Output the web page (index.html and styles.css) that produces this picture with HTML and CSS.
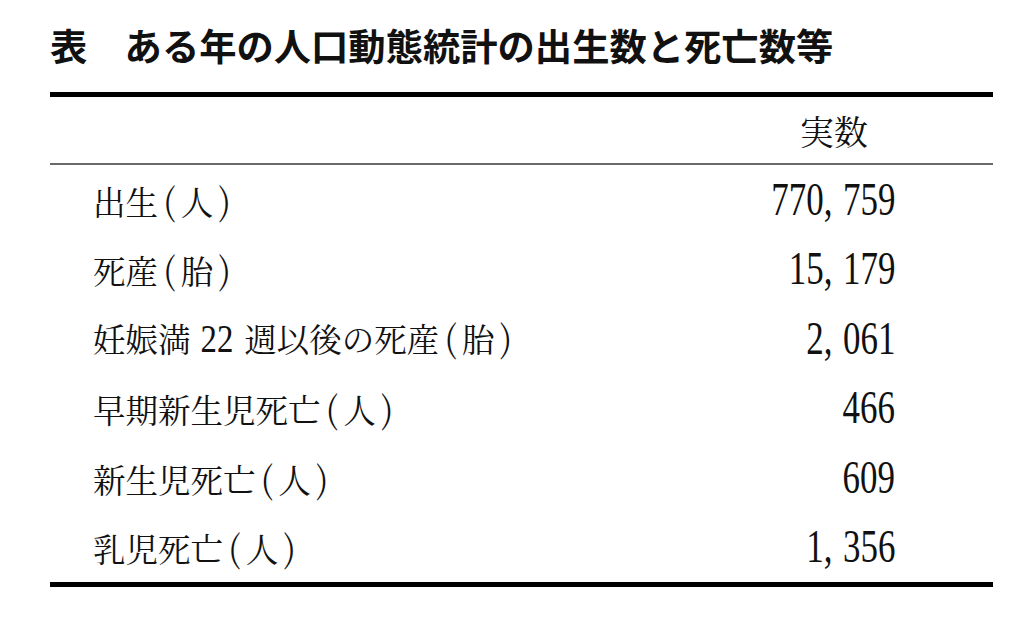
FILE: index.html
```html
<!DOCTYPE html>
<html lang="ja">
<head>
<meta charset="utf-8">
<title>人口動態統計</title>
<link rel="stylesheet" href="styles.css">
</head>
<body>
<div class="page">
  <h1 class="title">表　ある年の人口動態統計の出生数と死亡数等</h1>
  <table class="stats">
    <thead>
      <tr>
        <th class="label-head"></th>
        <th class="value-head">実数</th>
      </tr>
    </thead>
    <tbody>
      <tr><td class="label">出生<span class="paren">(</span>人<span class="paren">)</span></td><td class="value"><span class="num">770<span class="comma">,</span>759</span></td></tr>
      <tr><td class="label">死産<span class="paren">(</span>胎<span class="paren">)</span></td><td class="value"><span class="num">15<span class="comma">,</span>179</span></td></tr>
      <tr><td class="label">妊娠満 <span class="latin">22</span> 週以後の死産<span class="paren">(</span>胎<span class="paren">)</span></td><td class="value"><span class="num">2<span class="comma">,</span>061</span></td></tr>
      <tr><td class="label">早期新生児死亡<span class="paren">(</span>人<span class="paren">)</span></td><td class="value"><span class="num">466</span></td></tr>
      <tr><td class="label">新生児死亡<span class="paren">(</span>人<span class="paren">)</span></td><td class="value"><span class="num">609</span></td></tr>
      <tr><td class="label">乳児死亡<span class="paren">(</span>人<span class="paren">)</span></td><td class="value"><span class="num">1<span class="comma">,</span>356</span></td></tr>
    </tbody>
  </table>
</div>
</body>
</html>
```

FILE: styles.css
```css
html, body {
  margin: 0;
  padding: 0;
  background: #ffffff;
}

.page {
  width: 943px;
  padding: 0 41px 0 50px;
  color: #111;
}

.title {
  margin: 0;
  padding-top: 19px;
  font-family: "Noto Sans CJK JP", "Noto Sans", sans-serif;
  font-weight: 700;
  font-size: 37.3px;
  line-height: 52px;
  letter-spacing: 0;
  color: #111;
  white-space: nowrap;
}

.stats {
  margin-top: 21px;
  width: 943px;
  border-collapse: separate;
  border-spacing: 0;
  border-top: 5px solid #000;
  border-bottom: 5px solid #000;
  font-family: "Noto Serif CJK JP", "Noto Sans CJK JP", serif;
  font-weight: 400;
  font-size: 32.5px;
  color: #111;
}

.stats th {
  height: 66px;
  padding: 0;
  border-bottom: 2px solid #6a6a6a;
  font-weight: 400;
  font-size: 34px;
  vertical-align: middle;
}

.label-head {
  text-align: left;
}

.value-head {
  text-align: right;
  padding-right: 125px !important;
}

.stats td {
  height: 69.5px;
  padding: 0;
  vertical-align: middle;
  line-height: 1;
}

.label {
  padding-left: 43px !important;
  text-align: left;
  white-space: nowrap;
}

.paren {
  display: inline-block;
  margin: 0 5px;
  font-size: 36px;
  font-weight: 300;
  line-height: 1;
}

.latin {
  font-family: "Liberation Serif", serif;
  font-size: 40px;
  display: inline-block;
  margin: 0 -1.5px;
  transform: scaleX(0.82);
}

.value {
  text-align: right;
  padding-right: 98px !important;
}

.num {
  display: inline-block;
  font-family: "Liberation Serif", "Times New Roman", serif;
  font-size: 46px;
  line-height: 1;
  transform: scaleX(0.76);
  transform-origin: right center;
}

.comma {
  margin-right: 14px;
}
```
